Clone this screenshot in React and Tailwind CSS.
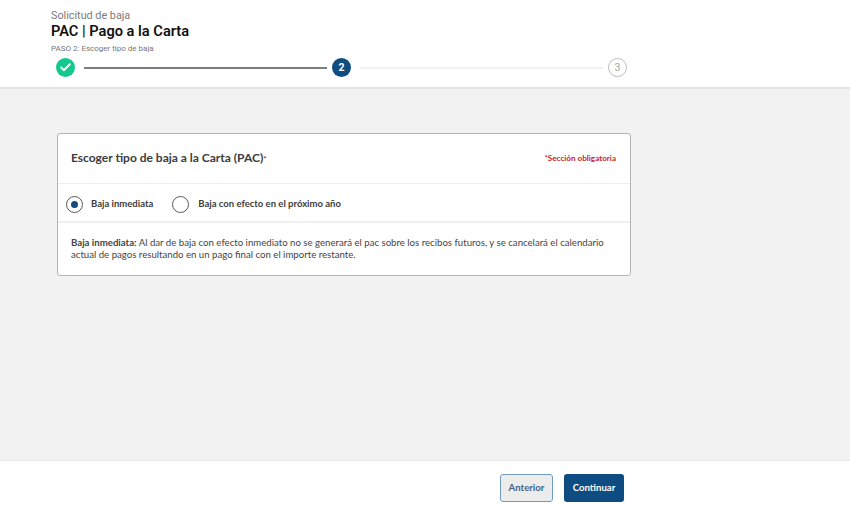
import { Check } from "lucide-react";

export default function App() {
  return (
    <div className="w-[850px] h-[505px] flex flex-col bg-white overflow-hidden font-['Lato',sans-serif] text-[#333]">
      {/* cabecera */}
      <header className="h-[89px] shrink-0 bg-white border-b-2 border-[#e3e3e3] pl-[51px] pt-[8px] font-['Roboto',sans-serif]">
        <p className="text-[10.8px] leading-[15px] text-[#7a7a7a]">Solicitud de baja</p>
        <h1 className="text-[14.6px] leading-[17px] font-semibold text-[#111]">PAC | Pago a la Carta</h1>
        <p className="text-[8px] leading-[10px] mt-[4px] text-[#777]">PASO 2: Escoger tipo de baja</p>
        <div className="flex items-center mt-[4px] ml-[5px] w-[572px]">
          <span className="w-[19px] h-[19px] rounded-full bg-[#14c98e] flex items-center justify-center">
            <Check size={13} strokeWidth={3.5} className="text-white" />
          </span>
          <span className="w-[243px] h-[2px] ml-[9px] bg-[#7d7d7d]" />
          <span className="w-[19px] h-[19px] ml-[5px] rounded-full bg-[#0f4c81] flex items-center justify-center text-white text-[10.5px] font-bold">2</span>
          <span className="w-[243px] h-[2px] ml-[9px] bg-[#f1f1f1]" />
          <span className="w-[19px] h-[19px] ml-[5px] rounded-full border border-[#bdbdbd] flex items-center justify-center text-[#a5a5a5] text-[10.5px]">3</span>
        </div>
      </header>

      {/* contenido */}
      <main className="flex-1 bg-[#f2f2f2] pt-[44px] pl-[57px]">
        <section className="w-[574px] h-[143px] bg-white border border-[#b4b4b4] rounded-[3px] flex flex-col">
          <div className="h-[50px] shrink-0 flex items-center justify-between pl-[13px] pr-[14px] pb-[1px] border-b border-[#eeeeee]">
            <h2 className="text-[12px] font-bold text-[#3c3c3c]">
              Escoger tipo de baja a la Carta (PAC)<span className="text-[#c8102e] text-[8px]">*</span>
            </h2>
            <span className="text-[8.1px] font-bold text-[#c4242f] pt-[1px]">*Sección obligatoria</span>
          </div>
          <div className="h-[39px] shrink-0 flex items-center pl-[8px] pt-[3px] border-b-2 border-[#f0f0f0] text-[9.5px] font-bold text-[#3c3c3c]">
            <span className="w-[17px] h-[17px] rounded-full border border-[#555] flex items-center justify-center">
              <span className="w-[7px] h-[7px] rounded-full bg-[#0f4c81]" />
            </span>
            <span className="ml-[8px]">Baja inmediata</span>
            <span className="w-[17px] h-[17px] ml-[19px] rounded-full border border-[#555]" />
            <span className="ml-[9px]">Baja con efecto en el próximo año</span>
          </div>
          <p className="pl-[13px] pr-[14px] pt-[13px] text-[9.65px] leading-[12px] text-[#444]">
            <b>Baja inmediata:</b> Al dar de baja con efecto inmediato no se generará el pac sobre los recibos futuros, y se cancelará el calendario actual de pagos resultando en un pago final con el importe restante.
          </p>
        </section>
      </main>

      {/* pie */}
      <footer className="h-[45px] shrink-0 bg-white border-t border-[#e8e8e8] flex items-start pt-[13px] pl-[500px] gap-[11px]">
        <button className="w-[53px] h-[28px] rounded-[3px] bg-[#ececec] border border-[#6f9cc0] text-[#3d6487] text-[9.6px] font-bold">Anterior</button>
        <button className="w-[60px] h-[28px] rounded-[3px] bg-[#0f4c81] text-white text-[9.6px] font-bold">Continuar</button>
      </footer>
    </div>
  );
}
